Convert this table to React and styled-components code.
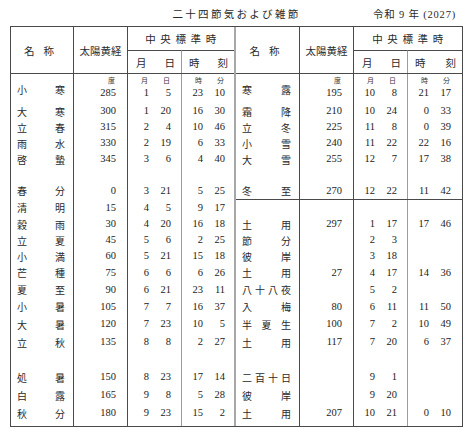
import React from 'react';
import styled, { createGlobalStyle } from 'styled-components';

const INK = '#4a4a4a';
const SOFT = '#9c9c9c';

const GlobalStyle = createGlobalStyle`
  *, *::before, *::after { box-sizing: border-box; }
  html, body { margin: 0; padding: 0; background: #fff; }
  body {
    font-family: "Liberation Serif", "Noto Sans CJK JP", serif;
    color: #1c1c1c;
  }
`;

const Sheet = styled.div`
  width: 463px;
  padding-left: 10px;
`;

const TitleBar = styled.div`
  display: grid;
  grid-template-columns: 1fr auto 1fr;
  align-items: center;
  height: 26px;
`;

const Title = styled.h1`
  grid-column: 2;
  margin: 0;
  font-size: 10.5px;
  font-weight: normal;
  letter-spacing: 2.3px;
  color: #2a2a2a;
`;

const Era = styled.span`
  justify-self: end;
  padding-right: 7px;
  font-size: 10.5px;
  letter-spacing: 0.8px;
  color: #2a2a2a;
`;

const Frame = styled.div`
  display: flex;
  border: 1px solid ${INK};
`;

const Divider = styled.div`
  width: 2px;
  background: #a8a8a8;
`;

const Half = styled.div`
  display: flex;
  flex-direction: column;
`;

const Head = styled.div`
  display: grid;
  grid-template-columns: ${p => p.$cols};
  grid-template-rows: 23px 23px;
  border-bottom: 1px solid ${INK};
  font-size: 10.5px;
  color: #2a2a2a;
`;

const SpanHead = styled.div`
  grid-row: 1 / 3;
  display: flex;
  align-items: center;
  justify-content: center;
  gap: ${p => p.$gap || 0}px;
  padding-right: ${p => p.$shift || 0}px;
  border-left: ${p => (p.$first ? 'none' : `1px solid ${INK}`)};
`;

const ClockHead = styled.div`
  grid-column: 3 / 5;
  display: flex;
  align-items: center;
  justify-content: center;
  letter-spacing: 4.6px;
  padding-left: 4px;
  border-left: 1px solid ${INK};
`;

const SubHead = styled.div`
  display: flex;
  align-items: center;
  justify-content: space-between;
  padding: 0 ${p => p.$right}px 0 ${p => p.$left}px;
  border-top: 1px solid ${INK};
  border-left: 1px solid ${p => (p.$soft ? SOFT : INK)};
`;

const Row = styled.div`
  display: grid;
  grid-template-columns: ${p => p.$cols};
  height: ${p => p.$h}px;
  border-top: ${p => (p.$rule ? `1px solid ${INK}` : 'none')};

  & > div {
    padding-top: ${p => p.$pt}px;
    padding-bottom: ${p => p.$pb}px;
  }
`;

const NameCell = styled.div`
  display: flex;
  justify-content: space-between;
  align-items: center;
  padding-left: 6px;
  padding-right: 8px;
  font-size: 10px;
  color: #2a2a2a;
`;

const DegCell = styled.div`
  display: flex;
  align-items: center;
  justify-content: flex-end;
  padding-right: 11px;
  border-left: 1px solid ${INK};
`;

const PairCell = styled.div`
  display: flex;
  align-items: center;
  gap: 8px;
  padding-left: 7px;
  border-left: 1px solid ${p => (p.$soft ? SOFT : INK)};
`;

const Num = styled.span`
  width: ${p => p.$w || 14}px;
  display: flex;
  flex-direction: column;
  align-items: flex-end;
  font-size: 10.5px;
  line-height: 16px;
`;

const Unit = styled.span`
  font-size: 7px;
  line-height: 8px;
  padding-right: 1px;
  color: #333;
`;

const HEIGHTS = [29, 16, 16, 16, 16, 15, 17, 17, 16, 16, 16, 17, 17, 17, 18, 18, 17, 18, 18, 22];

const LEFT = [
  ['小寒', 285, 1, 5, 23, 10],
  ['大寒', 300, 1, 20, 16, 30],
  ['立春', 315, 2, 4, 10, 46],
  ['雨水', 330, 2, 19, 6, 33],
  ['啓蟄', 345, 3, 6, 4, 40],
  null,
  ['春分', 0, 3, 21, 5, 25],
  ['清明', 15, 4, 5, 9, 17],
  ['穀雨', 30, 4, 20, 16, 18],
  ['立夏', 45, 5, 6, 2, 25],
  ['小満', 60, 5, 21, 15, 18],
  ['芒種', 75, 6, 6, 6, 26],
  ['夏至', 90, 6, 21, 23, 11],
  ['小暑', 105, 7, 7, 16, 37],
  ['大暑', 120, 7, 23, 10, 5],
  ['立秋', 135, 8, 8, 2, 27],
  null,
  ['処暑', 150, 8, 23, 17, 14],
  ['白露', 165, 9, 8, 5, 28],
  ['秋分', 180, 9, 23, 15, 2],
];

const RIGHT = [
  ['寒露', 195, 10, 8, 21, 17],
  ['霜降', 210, 10, 24, 0, 33],
  ['立冬', 225, 11, 8, 0, 39],
  ['小雪', 240, 11, 22, 22, 16],
  ['大雪', 255, 12, 7, 17, 38],
  null,
  ['冬至', 270, 12, 22, 11, 42],
  null,
  ['土用', 297, 1, 17, 17, 46],
  ['節分', '', 2, 3, '', ''],
  ['彼岸', '', 3, 18, '', ''],
  ['土用', 27, 4, 17, 14, 36],
  ['八十八夜', '', 5, 2, '', ''],
  ['入梅', 80, 6, 11, 11, 50],
  ['半夏生', 100, 7, 2, 10, 49],
  ['土用', 117, 7, 20, 6, 37],
  null,
  ['二百十日', '', 9, 1, '', ''],
  ['彼岸', '', 9, 20, '', ''],
  ['土用', 207, 10, 21, 0, 10],
];

const Value = ({ unit, children, w }) => (
  <Num $w={w}>
    {unit && <Unit>{unit}</Unit>}
    <span>{children}</span>
  </Num>
);

const HalfTable = ({ rows, cols, ruleAt }) => (
  <Half>
    <Head $cols={cols}>
      <SpanHead $first $gap={9} $shift={6}>
        <span>名</span>
        <span>称</span>
      </SpanHead>
      <SpanHead>太陽黄経</SpanHead>
      <ClockHead>中央標準時</ClockHead>
      <SubHead $left={8} $right={6}>
        <span>月</span>
        <span>日</span>
      </SubHead>
      <SubHead $soft $left={7} $right={6}>
        <span>時</span>
        <span>刻</span>
      </SubHead>
    </Head>
    {HEIGHTS.map((h, i) => {
      const r = rows[i] || ['', '', '', '', '', ''];
      const first = i === 0;
      const last = i === HEIGHTS.length - 1;
      return (
        <Row
          key={i}
          $cols={cols}
          $h={h}
          $rule={i === ruleAt}
          $pt={first ? 3 : 0}
          $pb={first ? 2 : last ? 4 : 0}
        >
          <NameCell>
            {[...r[0]].map((c, j) => (
              <span key={j}>{c}</span>
            ))}
          </NameCell>
          <DegCell>
            <Value unit={first && '度'} w={30}>{r[1]}</Value>
          </DegCell>
          <PairCell>
            <Value unit={first && '月'}>{r[2]}</Value>
            <Value unit={first && '日'}>{r[3]}</Value>
          </PairCell>
          <PairCell $soft>
            <Value unit={first && '時'}>{r[4]}</Value>
            <Value unit={first && '分'}>{r[5]}</Value>
          </PairCell>
        </Row>
      );
    })}
  </Half>
);

const App = () => (
  <Sheet>
    <GlobalStyle />
    <TitleBar>
      <Title>二十四節気および雑節</Title>
      <Era>令和 9 年 (2027)</Era>
    </TitleBar>
    <Frame>
      <HalfTable rows={LEFT} cols="62px 54px 54px 53px" />
      <Divider />
      <HalfTable rows={RIGHT} cols="63px 54px 54px 55px" ruleAt={7} />
    </Frame>
  </Sheet>
);

export default App;
